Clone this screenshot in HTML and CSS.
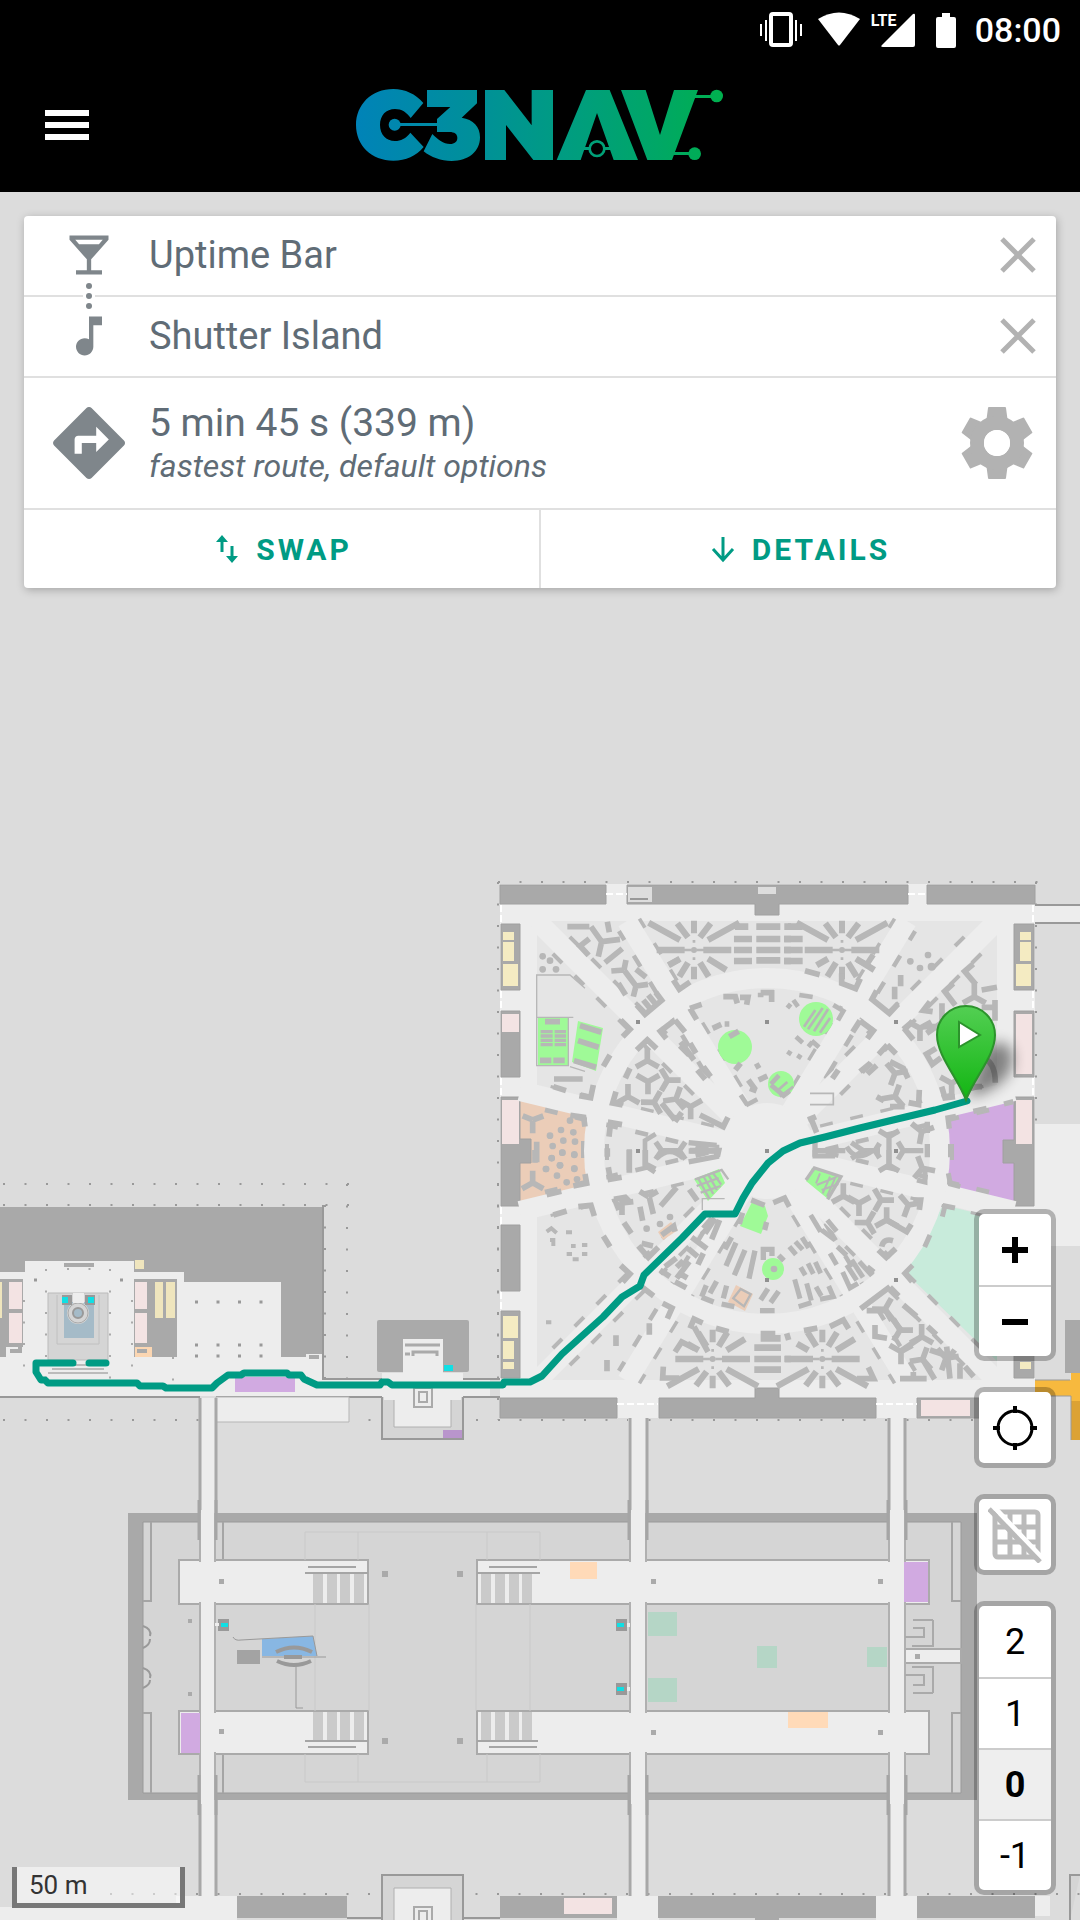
FILE: index.html
```html
<!DOCTYPE html>
<html lang="en">
<head>
<meta charset="utf-8">
<meta name="viewport" content="width=device-width, initial-scale=1">
<title>c3nav</title>
<link rel="stylesheet" href="styles.css">
</head>
<body>
<div class="statusbar">
  <svg class="status-vibrate" viewBox="0 0 42 36" aria-hidden="true"><rect x="11" y="2" width="20" height="31" rx="2" fill="none" stroke="#fff" stroke-width="4"/><path d="M1 12v12M6 8v21M36 8v21M41 12v12" stroke="#fff" stroke-width="2"/></svg>
  <svg class="status-wifi" viewBox="0 0 42 36" aria-hidden="true"><path d="M0 7Q21 -6 42 7L22 33Q21 34 20 33Z" fill="#fff"/></svg>
  <div class="status-signal"><span>LTE</span><svg viewBox="0 0 34 34" aria-hidden="true"><path d="M32 1q2 -1 2 1v30q0 2 -2 2H2q-3 0 -1 -2Z" fill="#fff"/></svg></div>
  <svg class="status-battery" viewBox="0 0 20 35" aria-hidden="true"><path d="M6 0h8v4h4q2 0 2 2v27q0 2 -2 2H2q-2 0 -2 -2V6q0 -2 2 -2h4Z" fill="#fff"/></svg>
  <span class="status-time">08:00</span>
</div>
<header class="header">
  <button class="menu-button" type="button" aria-label="Menu"><svg viewBox="0 0 44 30" aria-hidden="true"><path d="M0 3h44M0 15h44M0 27h44" stroke="#fff" stroke-width="6"/></svg></button>
  <svg class="logo" viewBox="0 0 1200 330" role="img" aria-label="c3nav">
    <defs><linearGradient id="brand" gradientUnits="userSpaceOnUse" x1="48" y1="0" x2="1148" y2="0"><stop offset="0" stop-color="#0083b8"/><stop offset=".33" stop-color="#009099"/><stop offset=".56" stop-color="#009c82"/><stop offset=".82" stop-color="#00a766"/><stop offset="1" stop-color="#00b04e"/></linearGradient></defs>
    <g fill="url(#brand)">
      <path d="M250 99C226 72 196 57 160 57C94 57 48 104 48 165C48 226 94 272 160 272C198 272 228 258 251 231L211 188C198 205 182 213 165 213C138 213 120 193 120 165C120 136 138 117 165 117C185 117 200 127 212 144Z"/>
      <path d="M164 159h130v9H164Z"/><circle cx="164" cy="164" r="18"/>
      <path d="M261 60H411V100L365 143C400 148 420 170 420 202C420 245 385 273 335 273C303 273 273 262 251 244L277 192C293 208 310 222 330 222C344 222 352 215 352 204C352 192 344 186 328 186H291V147L331 111H261Z"/>
      <path d="M435 60H493L575 166V60H639V270H580L498 165V270H435Z"/>
      <path d="M738 60H809L894 270H821L771 129L722 270H650Z"/>
      <path d="M728 231h22v9h-22ZM792 231h22v9h-22Z"/>
      <path d="M843 60H917L960 195L1002 60H1074L996 270H922Z"/>
      <path d="M1060 75h60v9h-60ZM990 246h65v9h-65Z"/><circle cx="1130" cy="78" r="19"/><circle cx="1064" cy="251" r="19"/>
    </g>
    <circle cx="771" cy="236" r="22" fill="#000" stroke="url(#brand)" stroke-width="8"/>
  </svg>
</header>
<main class="main">
  <svg class="map" viewBox="0 192 1080 1728" preserveAspectRatio="xMidYMid slice" role="img" aria-label="Indoor map with route">
    <defs>
      <path id="tri" d="M0 0V38M0 0L-34 -19M0 0L34 -19"/>
      <g id="burst">
        <path d="M-28 0h-84M28 0h84" stroke-width="19"/>
        <path d="M-30 0H-8M30 0H8M0 -22v-8M0 22v8" stroke-width="8"/>
        <path d="M0 -50v-38M0 50v38" stroke-width="18"/>
        <path d="M-18 -38l-32 -42M18 -38l32 -42M-18 38l-26 42M18 38l26 42M-42 -30l-94 -52M42 -30l94 -52M-42 26l-34 20M42 26l55 34" stroke-width="19"/>
      </g>
      <linearGradient id="pin" x1="0" y1="0" x2="0" y2="1"><stop offset="0" stop-color="#53cf53"/><stop offset="1" stop-color="#12b512"/></linearGradient>
      <filter id="soft" x="-50%" y="-50%" width="200%" height="200%"><feGaussianBlur stdDeviation="7"/></filter>
    </defs>
    <rect x="0" y="192" width="1080" height="1728" fill="#dcdcdc"/>

    <!-- column grid -->
    <g stroke="#999" stroke-width="2" stroke-dasharray="2 19.5" fill="none">
      <path d="M3 1184H350M3 1205H350M347 1184V1380M325 1205V1380M3 1420H480M498 1184V1380"/>
      <path d="M498 882H1040M498 1420H1040M498 882V1420M1036 882V1250M110 1894H1080"/>
    </g>

    <!-- west building -->
    <g>
      <path d="M0 1207H324V1380H0Z" fill="#a9a9a9"/>
      <path d="M0 1272H25V1261H134V1272H184V1282H281V1357H306V1354H323V1380H490V1396H0Z" fill="#ededed"/>
      <path d="M323 1205V1379H382M463 1379H500M0 1397H200M216 1397H382M463 1397H500" stroke="#999" stroke-width="2" fill="none"/>
      <path d="M0 1279H23V1347H6V1357H0ZM134 1279H177V1357H134Z" fill="#a9a9a9"/>
      <path d="M9 1282h13v27H9ZM9 1313h13v30H9ZM135 1282h12v27h-12ZM135 1313h12v30h-12Z" fill="#f3e3e3"/>
      <path d="M155 1282h8v36h-8ZM166 1282h9v36h-9ZM0 1282h2v36H0ZM135 1260h9v9h-9Z" fill="#efe5bd"/>
      <path d="M135 1347h17v10h-17Z" fill="#fbd6b2"/>
      <path d="M137 1351h10M10 1351h10V1345M64 1265h30M309 1357h10" stroke="#aaa" stroke-width="4" fill="none"/>
      <path d="M48 1293H108V1360H48Z" fill="#d5d5d5" stroke="#bbb" stroke-width="1"/>
      <path d="M57 1295V1344H99V1295" fill="none" stroke="#c0c0c0"/>
      <path d="M64 1302H94V1338H64Z" fill="#a5bbc8"/>
      <circle cx="78" cy="1313" r="8" fill="#a5bbc8" stroke="#d5d5d5" stroke-width="6"/><circle cx="78" cy="1313" r="5" fill="none" stroke="#999" stroke-width="2"/><circle cx="78" cy="1313" r="10" fill="none" stroke="#aaa"/>
      <path d="M62 1295h10v10H62ZM85 1295h10v10H85Z" fill="#999"/><path d="M73 1293h11v10H73Z" fill="#ededed"/>
      <path d="M62 1297h6v6h-6ZM88 1297h6v6h-6Z" fill="#10dfe4"/>
      <path d="M56 1365H100M52 1369H104M48 1373H108" stroke="#bbb" stroke-width="2"/>
      <g stroke="#999" stroke-width="3" stroke-dasharray="3 18.5"><path d="M195 1302H265M195 1345H265M195 1356H265M34 1280H50M120 1280H130"/></g>
      <g stroke="#aaa" stroke-width="2" stroke-dasharray="2 19.5"><path d="M46 1269V1380M110 1269V1380M24 1300V1380M132 1300V1380M67 1269H110M173 1357V1396"/></g>
      <path d="M216 1397H349V1422H216Z" fill="#ededed" stroke="#b5b5b5"/>
      <path d="M235 1377H295V1392H235Z" fill="#d1aae1"/>
      <rect x="377" y="1320" width="92" height="52" rx="2" fill="#aaa"/>
      <path d="M382 1373H403V1339H443V1373H463V1440H382Z" fill="#ededed"/>
      <path d="M382 1397V1439H463V1397" fill="#d5d5d5" stroke="#999" stroke-width="2"/>
      <path d="M394 1396V1427H451V1396Z" fill="#ededed" stroke="#b0b0b0"/>
      <path d="M384 1390H461V1400H384Z" fill="#ededed"/>
      <path d="M443 1430H462V1438H443Z" fill="#b995cc"/>
      <path d="M405 1345h35M405 1354h5M413 1356V1352H437V1356" stroke="#aaa" stroke-width="3" fill="none"/>
      <path d="M414 1388V1407H432V1388ZM419 1392H427V1402H419Z" fill="none" stroke="#aaa" stroke-width="2"/>
      <path d="M444 1365h9v6h-9Z" fill="#10dfe4"/>
    </g>

    <!-- vertical passages -->
    <g>
      <path d="M200 1398H216V1900H200ZM628 1398H648V1900H628ZM888 1398H906V1900H888Z" fill="#ededed"/>
      <path d="M200 1398V1900M216 1398V1900M630 1414V1900M647 1414V1900M889 1414V1900M905 1414V1900" stroke="#a8a8a8" stroke-width="3"/>
    </g>

    <!-- south hall -->
    <g>
      <path d="M128 1513H977V1800H128Z" fill="#a9a9a9"/>
      <path d="M143 1522H961V1793H143Z" fill="#d5d5d5" stroke="#999"/>
      <path d="M151 1522V1601H143M151 1793V1713H143M952 1522V1601H961M952 1793V1713H961M223 1522V1560M223 1754V1793" fill="none" stroke="#a5a5a5" stroke-width="2"/>
      <path d="M143 1626q9 3 7 10M150 1639q0 6 -7 9M143 1668q9 3 7 10M150 1680q0 5 -7 8" fill="none" stroke="#999" stroke-width="2"/>
      <g fill="#ededed" stroke="#aaa" stroke-width="2">
        <path d="M179 1560H368V1604H179ZM477 1560H929V1604H477ZM179 1711H368V1754H179ZM477 1711H929V1754H477Z"/>
        <path d="M905 1649H961V1663H905Z"/>
      </g>
      <path d="M200 1513V1800M215 1513V1800M630 1513V1800M646 1513V1800M889 1513V1800M905 1513V1800" stroke="#b0b0b0" stroke-width="2"/>
      <path d="M201 1510H214V1804H201ZM631 1510H645V1804H631ZM890 1510H904V1804H890ZM198 1562H218V1602H198ZM628 1562H650V1602H628ZM886 1562H908V1602H886ZM213 1713H218V1752H213ZM628 1713H650V1752H628ZM886 1713H908V1752H886Z" fill="#ededed"/>
      <path d="M199 1500V1540M216 1500V1540M629 1500V1540M647 1500V1540M888 1500V1540M906 1500V1540M199 1775V1815M216 1775V1815M629 1775V1815M647 1775V1815M888 1775V1815M906 1775V1815" stroke="#a5a5a5" stroke-width="3"/>
      <path d="M181 1713H200V1753H181ZM904 1562H928V1602H904Z" fill="#d1aae1"/>
      <g stroke="#c9c9c9" fill="none" stroke-width="1"><path d="M305 1560V1532H540V1560M358 1532V1560M487 1532V1560M305 1754V1782H540V1754M358 1782V1754M487 1782V1754M315 1604V1711M369 1604V1711M476 1604V1711M530 1604V1711"/></g>
      <g stroke="#cacaca" stroke-width="10"><path d="M318 1573V1603M332 1573V1603M345 1573V1603M359 1573V1603M486 1573V1603M500 1573V1603M514 1573V1603M527 1573V1603M318 1712V1740M332 1712V1740M345 1712V1740M359 1712V1740M486 1712V1740M500 1712V1740M514 1712V1740M527 1712V1740"/></g>
      <path d="M305 1573H368M308 1567H356M477 1573H540M489 1567H537M305 1741H368M308 1747H356M477 1741H538M489 1747H537" stroke="#a5a5a5" stroke-width="2"/>
      <g fill="#aaa"><path d="M219 1579h5v5h-5ZM219 1729h5v5h-5ZM382 1571h6v6h-6ZM457 1571h6v6h-6ZM382 1738h6v6h-6ZM457 1738h6v6h-6ZM651 1579h5v5h-5ZM878 1579h5v5h-5ZM651 1730h5v5h-5ZM878 1730h5v5h-5ZM188 1619h4v4h-4ZM188 1692h4v4h-4ZM915 1659h5v-5h-5Z"/></g>
      <path d="M218 1619h11v12h-11ZM616 1619h11v12h-11ZM616 1683h11v12h-11Z" fill="#999"/>
      <path d="M215 1623h4v3h-4ZM627 1623h3v4h-3ZM627 1687h3v4h-3Z" fill="#ededed"/>
      <path d="M221 1623h7v4h-7ZM617 1623h7v4h-7ZM617 1687h7v4h-7Z" fill="#10dfe4"/>
      <path d="M570 1562H597V1579H570ZM788 1712H828V1728H788Z" fill="#ffdab8"/>
      <path d="M648 1612H677V1636H648ZM648 1678H677V1702H648ZM757 1646H777V1668H757ZM867 1647H887V1667H867Z" fill="#b5d6c6"/>
      <path d="M262 1639L313 1636L317 1656H262Z" fill="#88b7e3"/>
      <path d="M237 1650h23v14h-23Z" fill="#a3a3a3"/>
      <path d="M233 1637q2 4 8 3L313 1636L317 1656M262 1657H326M296 1664V1708H303" fill="none" stroke="#999" stroke-width="1"/>
      <path d="M276 1652Q294 1643 312 1652M277 1661Q294 1669 311 1661M284 1657H302" fill="none" stroke="#999" stroke-width="4"/>
      <path d="M905 1637H924V1628H913M905 1675H924V1685H913M933 1620V1646H912M933 1693V1667H912M913 1620H933M913 1693H933" fill="none" stroke="#aaa" stroke-width="2"/>
    </g>

    <!-- southern edge -->
    <g>
      <path d="M176 1896H237V1920H176ZM617 1896H659V1920H617ZM876 1896H917V1920H876ZM0 1907H176V1920H0ZM1035 1896H1050V1916H1035Z" fill="#ededed"/>
      <path d="M237 1896H347V1918H237ZM500 1896H617V1918H500ZM658 1896H876V1918H658ZM917 1896H1035V1918H917ZM755 1916H779V1920H755Z" fill="#a9a9a9"/>
      <path d="M564 1898H612V1914H564Z" fill="#f3e3e3"/>
      <path d="M382 1920V1875H463V1920M1080 1875H1070V1920" fill="#d5d5d5" stroke="#999" stroke-width="2"/>
      <path d="M394 1920V1888H451V1920" fill="#ededed" stroke="#b0b0b0"/>
      <path d="M414 1920V1907H432V1920M419 1920V1911H427V1920" fill="none" stroke="#aaa" stroke-width="2"/>
      <path d="M347 1918H382M463 1918H500" stroke="#999" stroke-width="2"/>
    </g>

    <!-- east surroundings -->
    <g>
      <path d="M1035 905H1080V923H1035ZM1035 1124H1080V1246H1035Z" fill="#ededed"/>
      <path d="M1035 905H1080M1035 923H1080" stroke="#999" stroke-width="2"/>
      <path d="M1065 1320H1080V1373H1065Z" fill="#a9a9a9"/>
      <path d="M1032 1380H1071V1373H1080V1401H1071V1396H1032Z" fill="#f7b93e"/>
      <path d="M1071 1401H1080V1440H1071Z" fill="#dca234"/>
      <path d="M1032 1380H1070M1032 1396H1071V1440" fill="none" stroke="#999"/>
    </g>

    <!-- round hall -->
    <g>
      <path d="M500 884H1035V1418H500Z" fill="#ededed"/>
      <path d="M537 921H997V1380H537Z" fill="#e5e5e5"/>
      <path d="M520 1091L590 1108V1194L520 1211Z" fill="#ebcdb8"/>
      <path d="M1014 1091L944 1108V1194L1014 1211Z" fill="#d1aae1"/>
      <path d="M943 1205L997 1218V1361L906 1273Z" fill="#c8ebdb"/>
      <circle cx="767" cy="1151" r="163" fill="#e5e5e5"/>
      <g fill="#a9a9a9" stroke="#a0a0a0" stroke-width="1">
        <path d="M500 885H606V904H500ZM627 885H908V904H779V915H755V904H627ZM927 885H1035V904H927Z"/>
        <path d="M500 1398H617V1418H500ZM659 1398H755V1388H779V1398H876V1418H659ZM917 1398H1035V1418H917Z"/>
        <path d="M501 924H520V990H501ZM501 1011H520V1077H501ZM501 1097H520V1139H531V1163H520V1206H501ZM501 1225H520V1291H501ZM501 1311H520V1378H501Z"/>
        <path d="M1014 924H1034V990H1014ZM1014 1011H1034V1077H1014ZM1014 1097H1034V1206H1014V1163H1003V1140H1014ZM1014 1311H1034V1378H1014Z"/>
      </g>
      <path d="M628 887h24v15h-24ZM758 887h18v7h-18Z" fill="#ddd"/><path d="M630 899h18" stroke="#999" stroke-width="2"/>
      <path d="M503 932h11v8h-11ZM503 942h11v19h-11ZM503 964h15v22h-15ZM503 1316h15v22h-15ZM503 1341h11v18h-11ZM503 1362h11v7h-11ZM1020 932h11v8h-11ZM1020 942h11v19h-11ZM1016 964h15v22h-15ZM1020 1362h11v7h-11Z" fill="#f4ebc2"/>
      <path d="M502 1014h17v18h-17ZM502 1100h17v44h-17ZM1016 1014h16v60h-16ZM1016 1100h16v44h-16ZM921 1400h49v16h-49Z" fill="#f3e3e3"/>

      <g stroke="#b7b7b7" stroke-width="28" stroke-dasharray="13 18" fill="none">
        <path d="M731 1093L629 925M803 1093L905 925M731 1209L629 1377M803 1209L905 1377"/>
        <path d="M702 1086L556 940M832 1086L978 940M702 1216L556 1362M832 1216L978 1362"/>
        <path d="M711 1138L537 1096M823 1138L997 1096M711 1164L537 1206M823 1164L997 1206"/>
        <path d="M584 1141V1158" stroke-width="6" stroke-dasharray="none"/><path d="M607 1144V1160M952 1144V1160" stroke-width="4" stroke-dasharray="none"/>
      </g>
      <g stroke="#ededed" stroke-width="20" fill="none">
        <path d="M767 1151L627 921M767 1151L907 921M767 1151L627 1381M767 1151L907 1381M767 1151L537 921M767 1151L997 921M767 1151L537 1381M767 1151L997 1381M767 1151L520 1091M767 1151L1014 1091M767 1151L520 1211M767 1151L1014 1211"/>
        <circle cx="767" cy="1151" r="173"/>
      </g>
      <circle cx="767" cy="1151" r="48" fill="#ededed"/>
      <g fill="#9ffa97">
        <path d="M538 1018h31v48h-31ZM578 1021L603 1028L596 1071L572 1062Z"/>
        <circle cx="735" cy="1047" r="17"/><circle cx="816" cy="1019" r="17"/><circle cx="781" cy="1084" r="13"/><circle cx="773" cy="1269" r="11"/>
        <path d="M694 1179L719 1169L725 1183L708 1201ZM753 1200L765 1206L768 1216L761 1234L740 1226ZM812 1168L842 1176L828 1199L806 1181Z"/>
      </g>
      <path d="M658 1232L671 1222L678 1230L663 1240ZM736 1285L753 1294L745 1311L728 1302Z" fill="#ebcdb8"/>

      <!-- furniture, north west -->
      <g transform="translate(490 870) scale(.3333)" fill="none" stroke="#b7b7b7" stroke-width="17">
        <use href="#burst" x="612" y="240"/>
        <path d="M735 170h40M732 207h54M732 240h54M732 273h54M799 170h72M799 207h72M799 240h72M799 271h72M883 170h20M883 207h20M883 240h20M883 273h20" stroke-width="20"/>
        <path d="M232 170H298M352 155l6 32M335 215l-32 -45M335 215l55 -7M335 215l-10 45M296 256l-26 -28l28 -22M345 278l52 -42M402 300l-38 3M402 300l6 -30M402 300l36 48M438 348l36 -5M438 348l-8 32M438 298l30 24M385 340l22 35M440 405l25 28l50 -42l-18 -24M460 390l20 25M475 375l20 25M550 330l18 28l32 -22M535 285l32 -16"/>
        <path d="M392 450l28 28l-22 22M360 555l-20 34M192 627h86M190 650l38 12M268 677l34 6l8 -38M600 415l35 -12M600 415l20 34"/>
        <path d="M250 442H140V315H240L285 355M140 442V587H235V442M240 590l45 14" stroke-width="4"/>
        <path d="M152 485h36M152 498h36M152 511h36M152 524h36M194 485h34M194 498h34M194 511h34M194 524h34" stroke-width="10"/><path d="M165 455h45M150 571h34M190 571h34M270 467l64 20M264 512l62 20M252 572l66 20"/>
        <use href="#tri" transform="translate(472 572) rotate(180)"/><use href="#tri" x="474" y="635"/><use href="#tri" transform="translate(414 680) rotate(180)"/><use href="#tri" transform="translate(533 630) rotate(30)"/><use href="#tri" transform="translate(492 697) rotate(210)"/><use href="#tri" transform="translate(558 687) rotate(200)"/><use href="#tri" x="602" y="710"/>
        <path d="M440 540l32 -30l28 26M420 595l-14 30M378 665l-10 34l30 6M630 735l70 35l14 -28M555 755l20 -28M515 700l40 50"/>
        <path d="M555 450l-44 34l18 22M555 450l30 36M572 516l40 54M600 520l18 30M622 600l24 28M640 590l22 30"/>
        <path d="M700 380h36l6 20M750 382h24l-4 22M812 368h40M845 360v36M812 368v14M668 475l26 -12M704 462h14M718 500l28 -16M736 600l16 -20M775 630l22 30M796 592l14 -8M806 630l26 -12M780 655l20 8"/>
        <path d="M772 705l-20 -30M768 706l34 -18M843 642l24 -26M843 645l38 32l18 -14" stroke-width="14"/>
        <path d="M128 752v38M128 750l-30 -12M128 750l32 -12M140 815v62M357 800l5 -42l34 6M285 770l-4 -28l-40 -6"/>
        <path d="M497 792l-32 20v75l30 20" stroke-width="14"/><path d="M515 842l-18 -26M515 842l-18 26M515 842h55M568 842l18 -26M568 842l18 26M418 838v62M596 843h90M596 818l84 8M596 876l84 -16v-36" stroke-width="16"/>
        <g fill="#b7b7b7" stroke="none"><circle cx="612" cy="240" r="9"/><circle cx="158" cy="259" r="10"/><circle cx="180" cy="272" r="10"/><circle cx="158" cy="298" r="10"/><circle cx="198" cy="298" r="10"/><circle cx="240" cy="752" r="10"/><circle cx="213" cy="780" r="10"/><circle cx="250" cy="787" r="10"/><circle cx="180" cy="797" r="10"/><circle cx="220" cy="812" r="10"/><circle cx="188" cy="828" r="10"/><circle cx="255" cy="815" r="10"/><circle cx="217" cy="848" r="10"/><circle cx="253" cy="855" r="10"/><circle cx="185" cy="864" r="10"/><circle cx="210" cy="886" r="10"/><circle cx="253" cy="895" r="10"/><circle cx="168" cy="897" r="10"/></g>
      </g>

      <!-- furniture, north east -->
      <g transform="translate(780 870) scale(.3333)" fill="none" stroke="#b7b7b7" stroke-width="17">
        <use href="#burst" x="186" y="240"/><circle cx="186" cy="240" r="9" fill="#b7b7b7" stroke="none"/>
        <path d="M24 170h44M12 207h56M12 240h56M12 273h56" stroke-width="20"/>
        <path d="M75 302l44 12M185 310v30l42 16l14 -30M232 270l28 14l20 -30M290 362l-14 26l52 42l26 -28M362 315v34M344 350v38M580 282l-26 22l34 40M520 340l-26 24l32 42M450 395l-20 26l28 4"/>
        <use href="#tri" transform="translate(583 380) rotate(180)"/><use href="#tri" transform="translate(420 475)"/><use href="#tri" x="515" y="640"/><use href="#tri" transform="translate(345 610) rotate(20)"/><use href="#tri" transform="translate(345 680) rotate(200)"/><use href="#tri" transform="translate(425 785) rotate(10)"/>
        <path d="M605 360l46 -8M645 390v62M605 412h40M486 400v60M440 490l50 -35M372 475l28 34M370 478l28 -24M430 470h70M435 545l22 38l26 -20M485 650l10 34l30 -4M468 535l-22 14M600 560q46 10 46 78M580 650h26M540 600l40 30"/>
        <path d="M240 452l40 30l-18 24M240 452l-22 34M322 525l-26 28M322 525l26 26M175 600l-18 26M240 605l32 -26M262 612l28 -26M290 680l22 12M330 575l40 20l14 30M330 710h44M418 660l-2 44l-30 -6M90 738l20 50M108 740l-24 10"/>
        <path d="M160 405l30 18l-16 28M58 375l40 6M40 390l14 20M22 414l10 -12M48 500l20 18M22 545l12 8M52 556l12 8M95 512l22 20M85 530l12 -14" stroke-width="14"/>
        <path d="M72 470l34 -50M84 478l44 -64M102 484l42 -66M120 488l30 -44M0 680l40 -30M-8 662l30 -26" stroke-width="8"/>
        <path d="M105 815v45M108 842h88M327 800v90M327 800l-30 -18M327 800l30 -18M327 885l-30 18M327 885l30 18M250 842h50M250 842l-36 -24M250 842l-36 24M285 842l14 -22M285 842l14 22M370 842h60M370 842l-16 -26M370 842l-16 26M442 755v34M442 822v40M512 822v40M508 776l-4 -32l24 -5M580 724l40 -9M672 702l28 -7" stroke-width="16"/>
        <path d="M90 670H160V704H90" stroke-width="5"/>
        <g fill="#b7b7b7" stroke="none"><circle cx="391" cy="274" r="10"/><circle cx="420" cy="294" r="10"/><circle cx="444" cy="255" r="10"/><circle cx="455" cy="290" r="12"/></g>
      </g>

      <!-- furniture, south west -->
      <g transform="translate(490 1150) scale(.3333)" fill="none" stroke="#b7b7b7" stroke-width="17">
        <use href="#burst" transform="translate(668 627) scale(1 -1)"/><circle cx="668" cy="627" r="9" fill="#b7b7b7" stroke="none"/>
        <path d="M812 565h60M793 593h80M793 627h80M793 659h80M883 627h20M812 552h44" stroke-width="20"/>
        <path d="M128 100v-38M128 98l-32 18M128 98l32 18M135 0v38M250 108l40 -8l-5 -28M170 134l44 -10M190 195l40 -12M265 170l38 -4l10 32M340 258l20 32M392 346l28 26l-22 24M352 -5v25M355 52l6 36l34 -6M418 0v68M466 0v42l30 16M500 24q40 -40 80 0M600 2h86l-4 18"/>
        <path d="M170 245l14 -10l16 14M180 270h10v18M228 247h18M243 288h14M276 285h16M276 312h16M230 312h16M248 328h18M168 517h16" stroke-width="12"/>
        <path d="M378 556v32M478 520v34M351 630v34M518 460l28 14l-14 32M455 410l36 28M555 606l20 -30l40 20M600 535l12 -28l26 12M520 650l-2 34h50M678 535l38 10M612 530l42 76"/>
        <path d="M372 148l34 -6l16 16M375 150l12 30M396 195v-36l34 -4M450 170l8 42M475 140l-26 -16M475 140l28 -16M478 142l12 50M512 168l48 -56M598 118l24 34M402 218l22 32M445 288l30 34l30 -30M455 280l34 8M515 255l36 -26l4 16M510 360l30 20M525 350l34 -26M555 395l34 18M560 385l38 -50M572 372l20 12M560 352l20 -20M605 262l46 34M595 296l28 24M640 310l-16 34M640 235l26 -30M665 268l24 -58M645 250l30 -45"/>
        <path d="M725 262l-20 36M738 278l-30 70M765 300l-32 76M795 302l-18 84M820 330v-32h26v20M866 316l16 16M635 440l14 -34M635 442l36 14M660 430l20 -36M700 445l10 -38M695 462l38 8M812 450l22 -34M842 458l24 -34M810 482h44M850 158l34 -14l14 26M784 150l40 16M824 240l6 -24M748 222l10 -34" stroke-width="16"/>
        <path d="M730 445l22 -28l30 16l-20 36ZM615 88l80 -28l20 28M624 84l34 62M640 78l30 54M655 74l26 46M668 68l26 36M620 108l66 -24M632 128l60 -20" stroke-width="7"/>
        <path d="M637 180V146H704" stroke-width="4"/>
        <circle cx="852" cy="357" r="10" fill="#b7b7b7" stroke="none"/>
        <g fill="#b7b7b7" stroke="none"><circle cx="185" cy="25" r="10"/><circle cx="217" cy="8" r="10"/><circle cx="253" cy="13" r="10"/><circle cx="210" cy="46" r="10"/><circle cx="253" cy="57" r="10"/><circle cx="168" cy="57" r="10"/><circle cx="201" cy="77" r="10"/><circle cx="230" cy="97" r="10"/><circle cx="261" cy="88" r="10"/><circle cx="470" cy="236" r="10"/><circle cx="510" cy="222" r="10"/><circle cx="540" cy="201" r="10"/></g>
      </g>

      <!-- furniture, south east -->
      <g transform="translate(780 1150) scale(.3333)" fill="none" stroke="#b7b7b7" stroke-width="17">
        <use href="#burst" transform="translate(127 627) scale(1 -1)"/><circle cx="127" cy="627" r="9" fill="#b7b7b7" stroke="none"/>
        <use href="#tri" transform="translate(190 138) rotate(180)"/><use href="#tri" x="237" y="160"/><use href="#tri" transform="translate(303 150) rotate(30)"/><use href="#tri" transform="translate(263 218) rotate(210)"/><use href="#tri" transform="translate(320 210) rotate(180)"/><use href="#tri" transform="translate(385 165) rotate(20)"/><use href="#tri" transform="translate(315 478) rotate(210)"/><use href="#tri" transform="translate(360 540) rotate(30)"/><use href="#tri" transform="translate(425 560) rotate(180)"/><use href="#tri" x="363" y="605"/><use href="#tri" transform="translate(428 628) rotate(200)"/><use href="#tri" transform="translate(498 625) rotate(20)"/><use href="#tri" transform="translate(427 55) rotate(40)"/>
        <path d="M320 210l60 35l14 -22M400 150h22l-4 30M295 300l24 22l28 -26M305 290q6 -26 34 -18M330 410l-88 66M330 412l26 26M260 482h55M285 525v34l36 6M370 465l40 34M443 530l26 24M315 478l48 62M360 605l66 -45M360 686h80M400 686v-20M450 600l60 20l14 -20M500 590l10 96M540 640v46M555 650l26 30M428 628l36 60M20 550l6 20M72 542l40 -8M150 530l40 -20l16 26M265 652l16 34h-50"/>
        <path d="M92 195l30 50M125 240l40 30M142 210l28 34M150 310l20 34M172 290l28 26M188 366l22 48l24 -14M200 345l30 46M215 330l34 52M238 335l38 42M262 350l20 16M28 290l20 24M46 275l22 24M66 262l20 32M62 352l14 24M84 340l16 32M106 336l16 34M44 388l16 58M56 470l38 -12M80 400l14 52M108 410l16 28M120 448l40 -8l-14 -32" stroke-width="15"/>
        <path d="M487 200l8 -32l30 6M450 255l-16 36M398 346l-24 24l22 26M505 70l6 32l30 8M435 60v36l-24 -6M105 0v18h60M200 -10q30 50 80 10M327 0v60" stroke-width="15"/>
        <path d="M78 90l25 -36l80 26l-40 68" stroke-width="10"/><path d="M110 105l60 -24M125 120l50 -18M120 70l-12 30M150 80l-22 50M165 85l-24 54" stroke-width="6"/>
      </g>
      <g fill="#909090"><path d="M636 1020h4v4h-4ZM765 1020h4v4h-4ZM894 1020h4v4h-4ZM636 1149h4v4h-4ZM765 1149h4v4h-4ZM894 1149h4v4h-4ZM765 1278h4v4h-4ZM894 1278h4v4h-4Z"/></g>
      <g stroke="#fff" stroke-width="2" stroke-dasharray="7 3"><path d="M606 894H627M908 894H927M501 905V923M501 991V1011M501 1078V1097M501 1207V1225M501 1292V1311M1033 991V1011M1033 1078V1097M1033 905V923M617 1404H658M876 1404H917"/></g>
    </g>

    <!-- route -->
    <path d="M89 1363H106M73 1363H36V1372L41 1380H45L48 1383H137L140 1386H163L166 1388H212L217 1383L228 1375H241L244 1373H287L289 1375H301L304 1379L317 1385H380L382 1382H388L392 1385H503L504 1382H530L542 1376L562 1354L583 1335L603 1317L622 1297L640 1286L644 1275L682 1238L705 1214H735L743 1198L752 1183L768 1163L783 1151L800 1143L825 1137L860 1128L893 1120L935 1110L967 1101" fill="none" stroke="#009b84" stroke-width="7" stroke-linecap="round" stroke-linejoin="round"/>

    <path d="M968 1098L984 1050Q1004 1034 1012 1052Q1018 1084 968 1098Z" fill="#000" opacity=".45" filter="url(#soft)"/>
    <path d="M966 1100C958 1078 937 1056 937 1035A29 29 0 0 1 995 1035C995 1056 974 1078 966 1100Z" fill="url(#pin)" stroke="#2c932c" stroke-width="2"/>
    <path d="M959 1022L980 1035L959 1047Z" fill="#fff" stroke="#2c932c" stroke-width="2"/>
  </svg>

  <section class="search" aria-label="Route">
    <div class="row location">
      <svg class="location-icon" viewBox="0 0 24 24" aria-hidden="true"><path d="M21 5V3H3v2l8 9v5H6v2h12v-2h-5v-5l8-9zM7.43 7L5.66 5h12.69l-1.78 2H7.43z"/></svg>
      <input type="text" aria-label="Origin" value="Uptime Bar">
      <button class="clear" type="button" aria-label="Clear origin"><svg viewBox="0 0 36 36" aria-hidden="true"><path d="M2 2L34 34M34 2L2 34"/></svg></button>
    </div>
    <div class="row location">
      <svg class="dots" viewBox="0 0 12 30" aria-hidden="true"><path d="M0 9h12v12H0Z" fill="#fff"/><g fill="#7f868b"><circle cx="6" cy="5" r="3"/><circle cx="6" cy="15" r="3"/><circle cx="6" cy="25" r="3"/></g></svg>
      <svg class="location-icon" viewBox="0 0 24 24" aria-hidden="true"><path d="M12 3v10.550c-.59-.34-1.27-.55-2-.55-2.21 0-4 1.790-4 4s1.790 4 4 4 4-1.790 4-4V7h4V3h-6z"/></svg>
      <input type="text" aria-label="Destination" value="Shutter Island">
      <button class="clear" type="button" aria-label="Clear destination"><svg viewBox="0 0 36 36" aria-hidden="true"><path d="M2 2L34 34M34 2L2 34"/></svg></button>
    </div>
    <div class="row summary">
      <svg class="summary-icon" viewBox="2 2 20 20" aria-hidden="true"><path d="M21.710 11.290l-9-9c-.39-.39-1.020-.39-1.410 0l-9 9c-.39.390-.39 1.020 0 1.410l9 9c.39.390 1.020.390 1.410 0l9-9c.39-.38.39-1.010 0-1.410zM14 14.500V12h-4v3H8v-4c0-.55.45-1 1-1h5V7.500l3.500 3.500-3.500 3.500z"/></svg>
      <div class="summary-text"><strong>5 min 45 s (339 m)</strong><em>fastest route, default options</em></div>
      <button class="options" type="button" aria-label="Route options"><svg viewBox="-36 -36 72 72" aria-hidden="true"><defs><path id="tooth" d="M-8 -36H8Q9 -36 9 -35L11 -20H-11L-9 -35Q-9 -36 -8 -36Z"/></defs><use href="#tooth"/><use href="#tooth" transform="rotate(60)"/><use href="#tooth" transform="rotate(120)"/><use href="#tooth" transform="rotate(180)"/><use href="#tooth" transform="rotate(240)"/><use href="#tooth" transform="rotate(300)"/><circle r="20" fill="none" stroke="#b2b2b2" stroke-width="14"/><circle r="13" fill="#fff"/></svg></button>
    </div>
    <div class="row actions">
      <button type="button"><svg viewBox="0 0 24 30" aria-hidden="true"><path d="M7 18V5M17 12V25" stroke="#009b84" stroke-width="3"/><path d="M1 8L7 1L13 8ZM11 22L17 29L23 22Z" fill="#009b84"/></svg>Swap</button>
      <button type="button"><svg viewBox="0 0 24 30" aria-hidden="true"><path d="M12 3V26M2 15L12 26L22 15" fill="none" stroke="#009b84" stroke-width="3"/></svg>Details</button>
    </div>
  </section>

  <nav class="controls" aria-label="Map controls">
    <div class="control">
      <button type="button" aria-label="Zoom in"><svg viewBox="0 0 26 26" aria-hidden="true"><path d="M13 0V26M0 13H26" stroke="#000" stroke-width="6"/></svg></button>
      <button type="button" aria-label="Zoom out"><svg viewBox="0 0 26 26" aria-hidden="true"><path d="M0 13H26" stroke="#000" stroke-width="6"/></svg></button>
    </div>
    <div class="control"><button type="button" aria-label="Locate me"><svg class="locate" viewBox="0 0 44 44" aria-hidden="true"><circle cx="22" cy="22" r="17" fill="none" stroke="#000" stroke-width="3"/><path d="M22 0V7M22 37V44M0 22H7M37 22H44" stroke="#000" stroke-width="4"/></svg></button></div>
    <div class="control"><button type="button" aria-label="Toggle grid"><svg class="grid" viewBox="0 0 54 56" aria-hidden="true"><rect x="7" y="5" width="43" height="45" rx="3" fill="none" stroke="#bababa" stroke-width="5"/><path d="M22 5V50M36 5V50M7 20H51M7 35H51" stroke="#bababa" stroke-width="5"/><path d="M6 0L56 53" stroke="#fff" stroke-width="5"/><path d="M1 2L52 55" stroke="#bababa" stroke-width="5"/></svg></button></div>
    <div class="control levels">
      <button type="button">2</button>
      <button type="button">1</button>
      <button class="current" type="button" aria-current="true">0</button>
      <button type="button">-1</button>
    </div>
  </nav>
  <div class="scale">50 m</div>
</main>
</body>
</html>
```
FILE: styles.css
```css
* {
  box-sizing: border-box;
}

body {
  display: flex;
  flex-direction: column;
  min-height: 100vh;
  margin: 0;
  background: #dcdcdc;
  color: #606c76;
  font-family: Roboto, "Noto Sans", sans-serif;
}

button {
  display: flex;
  align-items: center;
  justify-content: center;
  margin: 0;
  padding: 0;
  border: 0;
  background: none;
  color: inherit;
  font: inherit;
}

svg {
  display: block;
  flex: none;
}

.statusbar {
  display: flex;
  align-items: center;
  justify-content: flex-end;
  height: 58px;
  padding: 2px 19px 0 0;
  background: #000;
  color: #fff;
}

.status-vibrate {
  width: 42px;
  height: 36px;
}

.status-wifi {
  width: 42px;
  height: 36px;
  margin-left: 16px;
}

.status-signal {
  display: flex;
  align-items: center;
  margin-left: 11px;
}

.status-signal span {
  align-self: flex-start;
  width: 10px;
  font-size: 16px;
  font-weight: 700;
  line-height: 16px;
}

.status-signal svg {
  width: 34px;
  height: 34px;
}

.status-battery {
  width: 20px;
  height: 35px;
  margin-left: 21px;
}

.status-time {
  margin-left: 19px;
  font-size: 34px;
  font-weight: 500;
  line-height: 40px;
}

.header {
  display: grid;
  grid-template-columns: 1fr auto 1fr;
  align-items: center;
  height: 134px;
  background: #000;
}

.menu-button {
  justify-self: start;
  padding: 20px 45px;
}

.menu-button svg {
  width: 44px;
  height: 30px;
}

.logo {
  width: 400px;
  height: 110px;
}

.main {
  position: relative;
  flex: 1;
  padding: 24px;
}

.map {
  position: absolute;
  inset: 0;
  width: 100%;
  height: 100%;
}

.search {
  position: relative;
  border-radius: 4px;
  background: #fff;
  box-shadow: 1px 2px 8px rgba(0, 0, 0, 0.25);
}

.row {
  position: relative;
  display: flex;
  align-items: center;
  border-bottom: 2px solid #e0e0e0;
}

.location {
  height: 81px;
  padding: 0 20px 2px 7px;
}

.location-icon {
  width: 52px;
  height: 52px;
  margin: 0 34px 0 32px;
  fill: #7f868b;
}

.location input {
  flex: 1;
  min-width: 0;
  height: 60px;
  padding: 0;
  border: 0;
  outline: 0;
  background: none;
  color: #606c76;
  font: 400 38px/48px Roboto, sans-serif;
}

.clear svg {
  width: 36px;
  height: 36px;
  fill: none;
  stroke: #b2b2b2;
  stroke-width: 5;
}

.dots {
  position: absolute;
  top: -16px;
  left: 59px;
  width: 12px;
  height: 30px;
}

.summary {
  height: 132px;
  padding: 0 23px 0 29px;
}

.summary-icon {
  width: 72px;
  height: 72px;
  margin-right: 24px;
  fill: #7f868b;
}

.summary-text {
  display: flex;
  flex: 1;
  flex-direction: column;
}

.summary-text strong {
  font-size: 39px;
  font-weight: 400;
  line-height: 46px;
}

.summary-text em {
  font-size: 32px;
  line-height: 40px;
}

.options svg {
  width: 72px;
  height: 72px;
  fill: #b2b2b2;
}

.actions {
  border-bottom: 0;
}

.actions button {
  flex: 1;
  gap: 17px;
  height: 78px;
  padding-left: 4px;
  color: #009b84;
  font-size: 30px;
  font-weight: 700;
  letter-spacing: 3px;
  text-transform: uppercase;
}

.actions button + button {
  border-left: 2px solid #e0e0e0;
}

.actions svg {
  width: 24px;
  height: 30px;
}

.controls {
  position: absolute;
  right: 24px;
  bottom: 25px;
  display: flex;
  flex-direction: column;
  gap: 26px;
}

.control {
  border: 5px solid rgba(0, 0, 0, 0.25);
  border-radius: 10px;
  background: #fff;
  background-clip: padding-box;
  overflow: hidden;
}

.control button {
  width: 72px;
  height: 71px;
  color: #000;
}

.control button + button {
  border-top: 2px solid #ccc;
}

.control svg {
  width: 26px;
  height: 26px;
}

.control .locate {
  width: 44px;
  height: 44px;
}

.control .grid {
  width: 54px;
  height: 56px;
}

.levels button {
  font-size: 36px;
}

.levels .current {
  background: #eee;
  font-weight: 700;
}

.scale {
  position: absolute;
  bottom: 12px;
  left: 12px;
  width: 173px;
  padding: 0 12px;
  border: 5px solid #777;
  border-top: 0;
  background: rgba(255, 255, 255, 0.5);
  color: #333;
  font-size: 26px;
  line-height: 36px;
}
```
